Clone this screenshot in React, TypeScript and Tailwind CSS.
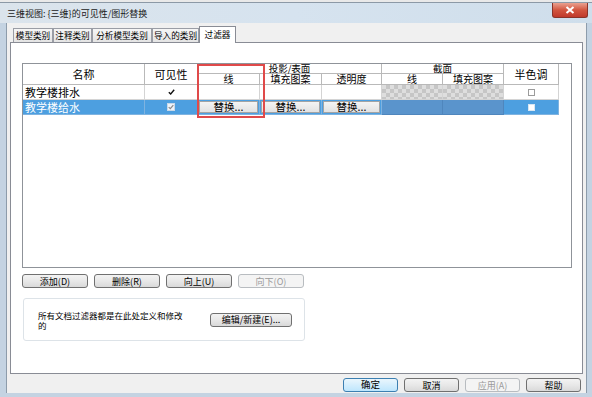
import React from "react";

const tabs = [
  { label: "模型类别", w: "w-[40px]" },
  { label: "注释类别", w: "w-[39px]" },
  { label: "分析模型类别", w: "w-[60px]" },
  { label: "导入的类别", w: "w-[47px]" },
];

const hd =
  "flex justify-center border-r border-b border-[#b9b9b9] text-black";
const cell = "border-r border-b border-[#d4d4d4]";
const cellSel = "border-r border-b border-[#7fb3e0] bg-[#4d9fe0]";

const btn =
  "flex h-[14px] items-center justify-center rounded-[3px] border border-[#707070] bg-linear-to-b from-[#f3f3f3] via-[#e8e8e8] to-[#d9d9d9] text-[9px] leading-none text-black";
const btnOff =
  "flex h-[14px] items-center justify-center rounded-[3px] border border-[#b8bcc0] bg-[#f4f4f4] text-[9px] leading-none text-[#9a9a9a]";

function Tick({ dim }: { dim?: boolean }) {
  return (
    <svg width="7" height="6" viewBox="0 0 7 6">
      <path
        d="M0.8 3.2 L2.7 5 L6.2 0.8"
        fill="none"
        stroke={dim ? "#8a8a8a" : "#111"}
        strokeWidth="1.4"
      />
    </svg>
  );
}

function Replace() {
  return (
    <div className="flex h-full w-full items-center justify-center border border-[#a4a4a4] bg-linear-to-b from-[#f4f4f4] to-[#e2e2e2] text-[10.5px] leading-none text-black">
      替换...
    </div>
  );
}

export default function App() {
  return (
    <div className="relative flex h-[397px] w-[592px] flex-col overflow-hidden bg-[#c9d7e5] font-['Noto_Sans_CJK_SC',sans-serif] text-black">
      {/* window behind */}
      <div className="h-[3px] border-b border-[#8c99a6] bg-[#e9e9e9]" />

      {/* title bar */}
      <div className="flex h-[20px] bg-linear-to-r from-[#dbe4ec] via-[#d6e3ef] to-[#cfdeeb]">
        <div className="self-center pl-[7px] text-[9px] leading-none text-[#1a1a1a]">
          三维视图: {"{三维}"}的可见性/图形替换
        </div>
        <div className="ml-auto mr-[4px] flex h-[15px] w-[36px] items-center justify-center rounded-b-[3px] border border-t-0 border-[#8a3328] bg-linear-to-b from-[#e9a08f] via-[#d2553f] to-[#c0392b]">
          <svg width="10" height="8" viewBox="0 0 10 8">
            <path d="M1.5 1 L8.5 7 M8.5 1 L1.5 7" stroke="#fff" strokeWidth="2" />
          </svg>
        </div>
      </div>

      {/* frame + client */}
      <div className="flex flex-1">
        <div className="w-[7px] border-r border-[#8d9cab] bg-[#c4d3e2]" />
        <div className="flex flex-1 flex-col bg-[#f0f0f0] px-[3px] pt-[3px]">
          {/* tabs */}
          <div className="flex h-[16px] items-end pl-[3px]">
            {tabs.map((t) => (
              <div
                key={t.label}
                className={`${t.w} flex h-[14px] items-start justify-center border border-b-0 border-[#9a9da5] bg-linear-to-b from-[#f6f6f6] to-[#e4e4e4] pt-[1px] text-[8.6px] leading-[11px]`}
              >
                {t.label}
              </div>
            ))}
            <div className="relative z-10 -mb-px flex h-[17px] w-[37px] items-start justify-center border border-b-0 border-[#898c95] bg-white pt-[2px] text-[8.6px] leading-[11px]">
              过滤器
            </div>
          </div>

          {/* tab panel */}
          <div className="flex h-[332px] flex-col border border-[#898c95] bg-white">
            {/* filter grid */}
            <div className="ml-[11px] mt-[20px] h-[205px] w-[550px] border border-[#8f9399] bg-white">
              <div className="grid grid-cols-[122px_53px_62px_62px_60px_61px_61px_55px] grid-rows-[10px_11px_15px_15px]">
                <div className={`${hd} row-span-2 items-center text-[11px] leading-[11px]`}>名称</div>
                <div className={`${hd} row-span-2 items-center text-[11px] leading-[11px]`}>可见性</div>
                <div className={`${hd} col-span-3 items-start text-[9.5px] leading-[9px]`}>投影/表面</div>
                <div className={`${hd} col-span-2 items-start text-[9.5px] leading-[9px]`}>截面</div>
                <div className={`${hd} row-span-2 items-center text-[11px] leading-[11px]`}>半色调</div>
                <div className={`${hd} items-end text-[10px] leading-[10px]`}>线</div>
                <div className={`${hd} items-end text-[10px] leading-[10px]`}>填充图案</div>
                <div className={`${hd} items-end text-[10px] leading-[10px]`}>透明度</div>
                <div className={`${hd} items-end text-[10px] leading-[10px]`}>线</div>
                <div className={`${hd} items-end text-[10px] leading-[10px]`}>填充图案</div>

                {/* row 1 */}
                <div className={`${cell} flex items-center pl-[2px] text-[11px] leading-none`}>
                  教学楼排水
                </div>
                <div className={`${cell} flex items-center justify-center`}>
                  <Tick />
                </div>
                <div className={cell} />
                <div className={cell} />
                <div className={cell} />
                <div
                  className={`${cell} bg-[repeating-conic-gradient(#c6c6c6_0_25%,#dedede_0_50%)] bg-[length:8px_8px]`}
                />
                <div
                  className={`${cell} bg-[repeating-conic-gradient(#c6c6c6_0_25%,#dedede_0_50%)] bg-[length:8px_8px]`}
                />
                <div className={`${cell} flex items-center justify-center`}>
                  <div className="h-[7px] w-[7px] border border-[#9c9c9c] bg-white" />
                </div>

                {/* row 2, selected */}
                <div
                  className={`${cellSel} flex items-center pl-[2px] text-[11px] leading-none text-white`}
                >
                  教学楼给水
                </div>
                <div className={`${cellSel} flex items-center justify-center`}>
                  <div className="flex h-[8px] w-[8px] items-center justify-center border border-[#c8d8e8] bg-[#eef4fa]">
                    <Tick dim />
                  </div>
                </div>
                <div className={`${cellSel} p-[1px]`}>
                  <Replace />
                </div>
                <div className={`${cellSel} p-[1px]`}>
                  <Replace />
                </div>
                <div className={`${cellSel} p-[1px]`}>
                  <Replace />
                </div>
                <div className="border-r border-b border-[#4f86bd] bg-[#5a94cc]" />
                <div className="border-r border-b border-[#4f86bd] bg-[#5a94cc]" />
                <div className={`${cellSel} flex items-center justify-center`}>
                  <div className="h-[7px] w-[7px] border border-[#d8e6f2] bg-white" />
                </div>
              </div>
            </div>

            {/* list buttons */}
            <div className="ml-[11px] mt-[6px] flex gap-[6px]">
              <div className={`${btn} w-[66px]`}>添加(D)</div>
              <div className={`${btn} w-[66px]`}>删除(R)</div>
              <div className={`${btn} w-[66px]`}>向上(U)</div>
              <div className={`${btnOff} w-[66px]`}>向下(O)</div>
            </div>

            {/* filter group */}
            <div className="ml-[12px] mt-[10px] flex h-[43px] w-[282px] items-center rounded-[3px] border border-[#dde3e8] pl-[14px]">
              <div className="w-[150px] text-[8.5px] leading-[10px]">
                所有文档过滤器都是在此处定义和修改的
              </div>
              <div className={`${btn} ml-[22px] w-[82px]`}>编辑/新建(E)...</div>
            </div>
          </div>

          {/* dialog buttons */}
          <div className="flex justify-end gap-[6px] pr-[2px] pt-[4px]">
            <div className="flex h-[14px] w-[55px] items-center justify-center rounded-[3px] border border-[#3c7fb1] bg-linear-to-b from-[#eaf6fd] to-[#bee6fd] text-[9.5px] leading-none">
              确定
            </div>
            <div className={`${btn} w-[55px] text-[9.5px]`}>取消</div>
            <div className={`${btnOff} w-[55px] text-[9.5px]`}>应用(A)</div>
            <div className={`${btn} w-[55px] text-[9.5px]`}>帮助</div>
          </div>
        </div>
        <div className="w-[6px] border-l border-[#8d9cab] bg-[#c4d3e2]" />
      </div>
      <div className="h-[4px] bg-[#c4d3e2]" />

      {/* red annotation box */}
      <div className="absolute left-[197px] top-[64px] h-[54px] w-[68px] border-2 border-[#e04a4a]" />
    </div>
  );
}
